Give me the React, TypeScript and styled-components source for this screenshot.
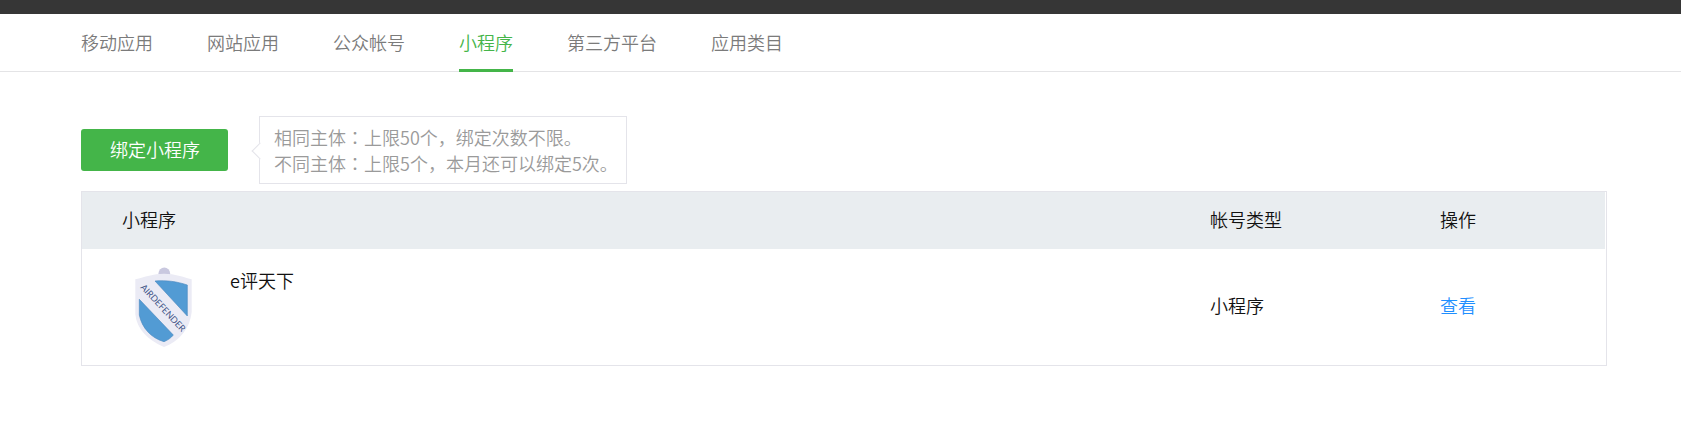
import React from 'react';
import styled, { createGlobalStyle } from 'styled-components';

const GlobalStyle = createGlobalStyle`
  * {
    box-sizing: border-box;
  }
  body {
    margin: 0;
    background: #fff;
    color: #111;
    font-family: "Noto Sans CJK SC", sans-serif;
    font-size: 18px;
    font-weight: 350;
    line-height: 26px;
  }
`;

const TopBar = styled.div`
  height: 14px;
  background: #363636;
`;

const TabBar = styled.nav`
  display: flex;
  gap: 54px;
  padding: 0 74px 0 81px;
  border-bottom: 1px solid #e4e4e6;
`;

const Tab = styled.a<{ $active?: boolean }>`
  margin-bottom: -1px;
  padding: 15px 0 14px;
  border-bottom: 3px solid ${(p) => (p.$active ? '#44b549' : 'transparent')};
  color: ${(p) => (p.$active ? '#44b549' : '#7b7b7b')};
  text-decoration: none;
  white-space: nowrap;
`;

const Content = styled.main`
  padding: 44px 74px 55px 81px;
`;

const Actions = styled.div`
  display: flex;
  align-items: center;
  gap: 31px;
  margin-bottom: 7px;
`;

const BindButton = styled.button`
  height: 42px;
  padding: 0 28px 2px 29px;
  border: 0;
  border-radius: 3px;
  background: #44b549;
  color: #fff;
  font: inherit;
  cursor: pointer;
`;

const Hint = styled.div`
  position: relative;
  padding: 7px 8px 7px 14px;
  border: 1px solid #e4e4ea;
  color: #9a9a9a;

  &::before {
    content: "";
    position: absolute;
    left: -6px;
    top: 28px;
    width: 11px;
    height: 11px;
    border: solid #e4e4ea;
    border-width: 0 0 1px 1px;
    background: #fff;
    transform: rotate(45deg);
  }
`;

const HintLine = styled.p`
  margin: 0;
`;

const Mark = styled.span`
  font-family: "Noto Sans CJK TC", sans-serif;
`;

const Panel = styled.section`
  padding-right: 1px;
  border: 1px solid #e4e4ea;
`;

const Table = styled.table`
  width: 100%;
  table-layout: fixed;
  border-collapse: collapse;
`;

const HeadCell = styled.th<{ $width?: number }>`
  width: ${(p) => (p.$width ? `${p.$width}px` : 'auto')};
  height: 57px;
  padding: 0 0 4px 40px;
  background: #e9edf0;
  font-weight: inherit;
  text-align: left;
`;

const Cell = styled.td`
  height: 116px;
  padding: 0 0 4px 40px;
`;

const Program = styled.div`
  display: flex;
  gap: 26px;
  padding: 4px 0 0 2px;
`;

const ProgramName = styled.span``;

const ViewLink = styled.a`
  color: #1f8fff;
  text-decoration: none;
`;

const Logo = styled.svg`
  display: block;
  width: 80px;
  height: 80px;
`;

const LogoText = styled.text`
  font-family: Lato, "Liberation Sans", sans-serif;
  font-size: 9px;
  font-weight: 400;
`;

const tabs = ['移动应用', '网站应用', '公众帐号', '小程序', '第三方平台', '应用类目'];

function ShieldLogo() {
  return (
    <Logo viewBox="0 0 80 80" role="img" aria-label="AIRDEFENDER">
      <circle cx="40.3" cy="6.3" r="5.8" fill="#c9c8df" />
      <path
        d="M11.3 12.3C21 10 29 6.7 40 6.7S59 10 67.7 12.3V45C66 61 56 74 40 80C24 73 12.5 62 11.3 47Z"
        fill="#ebebf5"
      />
      <path d="M31 14C42 13 53 14.5 63.3 18V49Z" fill="#529bd4" stroke="#4584bd" strokeWidth="0.6" />
      <path
        d="M15.3 32.3V48C18 61 27 71 40 74.7C44 73 47 71 49.3 68Z"
        fill="#529bd4"
        stroke="#4584bd"
        strokeWidth="0.6"
      />
      <LogoText x="39" y="44" textAnchor="middle" transform="rotate(47 39 41)" fill="#3f5487">
        AIRDEFENDER
      </LogoText>
    </Logo>
  );
}

export default function App() {
  return (
    <>
      <GlobalStyle />
      <TopBar />
      <TabBar>
        {tabs.map((label) => (
          <Tab
            key={label}
            href="#"
            $active={label === '小程序'}
            aria-current={label === '小程序' ? 'page' : undefined}
          >
            {label}
          </Tab>
        ))}
      </TabBar>
      <Content>
        <Actions>
          <BindButton type="button">绑定小程序</BindButton>
          <Hint>
            <HintLine>
              相同主体<Mark>：</Mark>上限50个，绑定次数不限。
            </HintLine>
            <HintLine>
              不同主体<Mark>：</Mark>上限5个，本月还可以绑定5次。
            </HintLine>
          </Hint>
        </Actions>
        <Panel>
          <Table>
            <thead>
              <tr>
                <HeadCell scope="col">小程序</HeadCell>
                <HeadCell scope="col" $width={230}>帐号类型</HeadCell>
                <HeadCell scope="col" $width={205}>操作</HeadCell>
              </tr>
            </thead>
            <tbody>
              <tr>
                <Cell>
                  <Program>
                    <ShieldLogo />
                    <ProgramName>e评天下</ProgramName>
                  </Program>
                </Cell>
                <Cell>小程序</Cell>
                <Cell>
                  <ViewLink href="#">查看</ViewLink>
                </Cell>
              </tr>
            </tbody>
          </Table>
        </Panel>
      </Content>
    </>
  );
}
